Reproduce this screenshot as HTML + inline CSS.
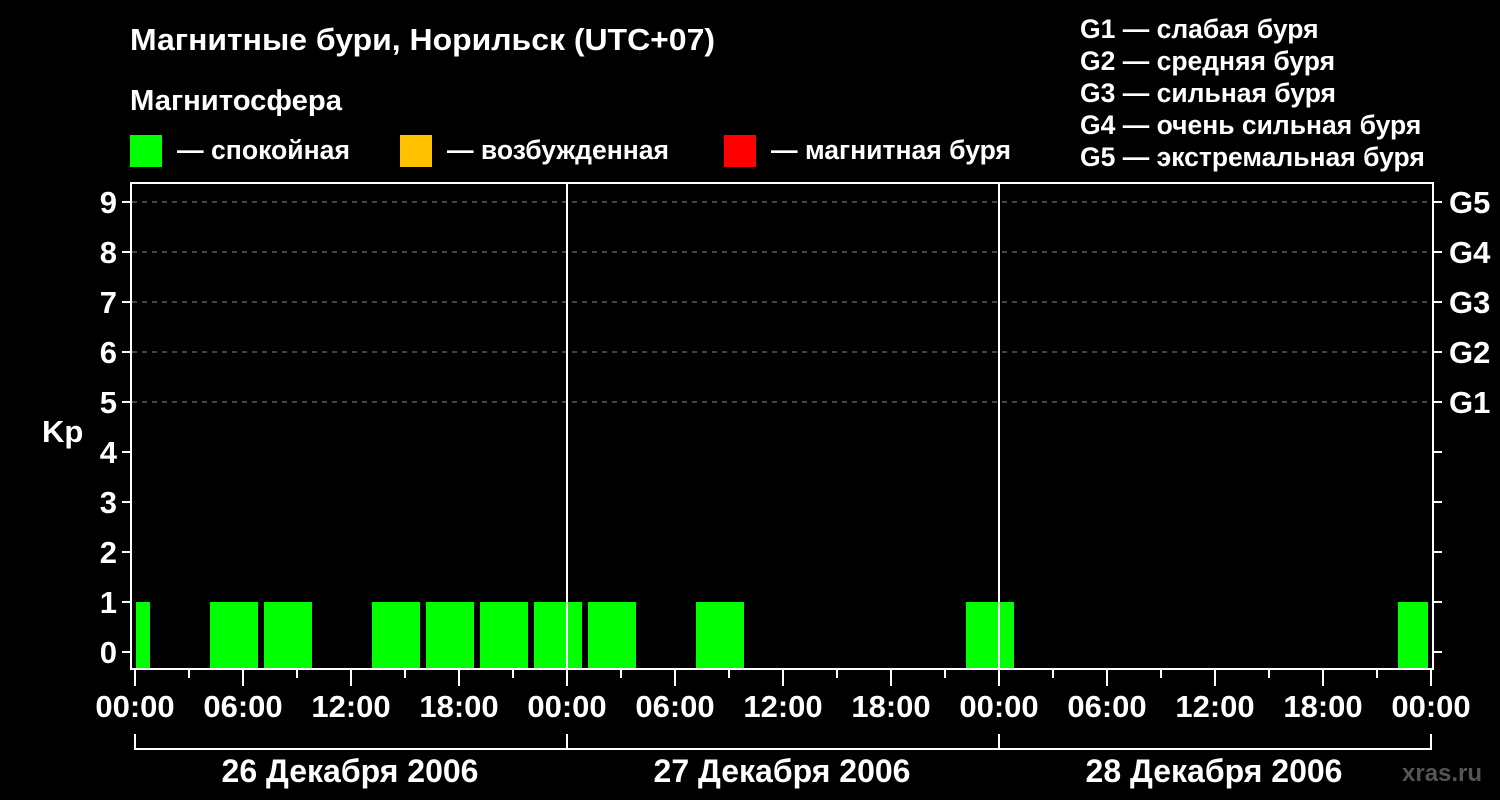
<!DOCTYPE html>
<html><head><meta charset="utf-8"><style>
html,body{margin:0;padding:0;background:#000;width:1500px;height:800px;overflow:hidden}
svg{display:block}
text{font-family:"Liberation Sans",sans-serif;font-weight:bold;fill:#fff}
</style></head><body>
<svg width="1500" height="800" viewBox="0 0 1500 800">
<rect width="1500" height="800" fill="#000"/>
<text x="130" y="50" font-size="31" textLength="585" lengthAdjust="spacingAndGlyphs">Магнитные бури, Норильск (UTC+07)</text>
<text x="130" y="110" font-size="29" textLength="212" lengthAdjust="spacingAndGlyphs">Магнитосфера</text>
<rect x="130" y="135" width="32" height="32" fill="#00ff00"/>
<text x="177" y="159" font-size="27" textLength="173" lengthAdjust="spacingAndGlyphs">— спокойная</text>
<rect x="400" y="135" width="32" height="32" fill="#ffc000"/>
<text x="447" y="159" font-size="27" textLength="222" lengthAdjust="spacingAndGlyphs">— возбужденная</text>
<rect x="724" y="135" width="32" height="32" fill="#ff0000"/>
<text x="771" y="159" font-size="27" textLength="240" lengthAdjust="spacingAndGlyphs">— магнитная буря</text>
<g font-size="26.5">
<text x="1080" y="38">G1 — слабая буря</text>
<text x="1080" y="70">G2 — средняя буря</text>
<text x="1080" y="102">G3 — сильная буря</text>
<text x="1080" y="134">G4 — очень сильная буря</text>
<text x="1080" y="166">G5 — экстремальная буря</text>
</g>
<g stroke="#888" stroke-width="1" stroke-dasharray="5,5">
<line x1="132" y1="202" x2="1432" y2="202"/>
<line x1="132" y1="252" x2="1432" y2="252"/>
<line x1="132" y1="302" x2="1432" y2="302"/>
<line x1="132" y1="352" x2="1432" y2="352"/>
<line x1="132" y1="402" x2="1432" y2="402"/>
</g>
<g fill="#00ff00">
<rect x="136" y="602" width="14" height="66"/>
<rect x="210" y="602" width="48" height="66"/>
<rect x="264" y="602" width="48" height="66"/>
<rect x="372" y="602" width="48" height="66"/>
<rect x="426" y="602" width="48" height="66"/>
<rect x="480" y="602" width="48" height="66"/>
<rect x="534" y="602" width="48" height="66"/>
<rect x="588" y="602" width="48" height="66"/>
<rect x="696" y="602" width="48" height="66"/>
<rect x="966" y="602" width="48" height="66"/>
<rect x="1398" y="602" width="30" height="66"/>
</g>
<g stroke="#fff" stroke-width="2" fill="none">
<rect x="131" y="183" width="1302" height="486"/>
<line x1="567" y1="183" x2="567" y2="669"/>
<line x1="999" y1="183" x2="999" y2="669"/>
</g>
<g stroke="#fff" stroke-width="2" id="ticks"></g>
<g font-size="31" text-anchor="end" id="ylab"></g>
<g font-size="31" id="glab"></g>
<text x="42" y="442" font-size="31">Kp</text>
<g font-size="31" text-anchor="middle" id="xlab"></g>
<g stroke="#fff" stroke-width="2" fill="none">
<polyline points="135,734 135,749 1431,749 1431,734"/>
<line x1="567" y1="734" x2="567" y2="749"/>
<line x1="999" y1="734" x2="999" y2="749"/>
</g>
<g font-size="32" text-anchor="middle">
<text x="350" y="782">26 Декабря 2006</text>
<text x="782" y="782">27 Декабря 2006</text>
<text x="1214" y="782">28 Декабря 2006</text>
</g>
<text x="1402" y="781" font-size="24" style="fill:#555">xras.ru</text>
<script>
var ns="http://www.w3.org/2000/svg";
function el(p,t,a,txt){var e=document.createElementNS(ns,t);for(var k in a)e.setAttribute(k,a[k]);if(txt)e.textContent=txt;document.getElementById(p).appendChild(e);}
for(var i=0;i<=9;i++){var y=652-50*i;
el("ticks","line",{x1:122,y1:y,x2:131,y2:y});
el("ticks","line",{x1:1433,y1:y,x2:1442,y2:y});
el("ylab","text",{x:117,y:y+11},String(i));
if(i>=5)el("glab","text",{x:1449,y:y+11},"G"+(i-4));}
var labs=["00:00","06:00","12:00","18:00"];
for(var h=0;h<=72;h+=3){var x=135+18*h;var maj=h%6==0;
el("ticks","line",{x1:x,y1:669,x2:x,y2:maj?686:678});
if(maj)el("xlab","text",{x:x,y:717},labs[(h%24)/6]);}
</script>
</svg>
</body></html>
